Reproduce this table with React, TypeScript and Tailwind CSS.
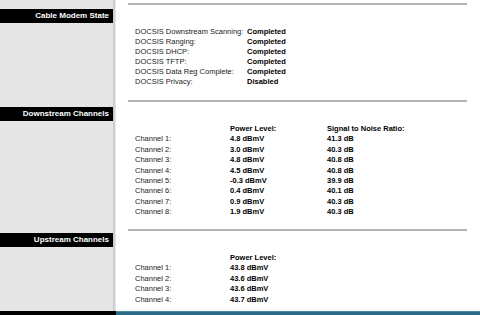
const cableRows = [
  ['DOCSIS Downstream Scanning:', 'Completed'],
  ['DOCSIS Ranging:', 'Completed'],
  ['DOCSIS DHCP:', 'Completed'],
  ['DOCSIS TFTP:', 'Completed'],
  ['DOCSIS Data Reg Complete:', 'Completed'],
  ['DOCSIS Privacy:', 'Disabled'],
]

const downstream = [
  ['4.8 dBmV', '41.3 dB'],
  ['3.0 dBmV', '40.3 dB'],
  ['4.8 dBmV', '40.8 dB'],
  ['4.5 dBmV', '40.8 dB'],
  ['-0.3 dBmV', '39.9 dB'],
  ['0.4 dBmV', '40.1 dB'],
  ['0.9 dBmV', '40.3 dB'],
  ['1.9 dBmV', '40.3 dB'],
]

const upstream = ['43.8 dBmV', '43.6 dBmV', '43.6 dBmV', '43.7 dBmV']

function SideTitle({ title, top }: { title: string; top: string }) {
  return (
    <div className="flex shrink-0">
      <div className={`w-[113px] bg-[#e6e6e6] ${top}`}>
        <div className="flex h-[14px] items-center justify-end bg-black pr-[4px] text-[8px] font-bold text-white">
          {title}
        </div>
      </div>
      <div className="w-[3px] bg-gradient-to-r from-[#bdbdbd] to-[#ececec]" />
    </div>
  )
}

function Rule() {
  return <div className="mt-[3px] ml-[12px] mr-[13px] border-t-2 border-[#b4b4b4]" />
}

function Section({
  title,
  height,
  top,
  children,
}: {
  title: string
  height: string
  top: string
  children: React.ReactNode
}) {
  return (
    <div className={`flex ${height}`}>
      <SideTitle title={title} top={top} />
      <div className="flex-1 bg-white">
        <Rule />
        <div className="mt-[22px] pl-[19px]">{children}</div>
      </div>
    </div>
  )
}

export default function App() {
  return (
    <div className="flex h-[315px] w-[480px] flex-col overflow-hidden bg-white font-['Liberation_Sans',Arial,sans-serif] text-[7.5px] text-[#111]">
      <Section title="Cable Modem State" height="h-[97px]" top="pt-[9px]">
        <div className="grid grid-cols-[112px_auto] leading-[10px]">
          {cableRows.map(([label, value]) => (
            <div key={label} className="contents">
              <span className="text-[#222]">{label}</span>
              <span className="font-bold text-black">{value}</span>
            </div>
          ))}
        </div>
      </Section>

      <Section title="Downstream Channels" height="h-[129px]" top="pt-[10px]">
        <div className="grid grid-cols-[95px_97px_auto] leading-[10.4px]">
          <span />
          <span className="font-bold text-black">Power Level:</span>
          <span className="font-bold text-black">Signal to Noise Ratio:</span>
          {downstream.map(([power, snr], i) => (
            <div key={i} className="contents">
              <span className="text-[#222]">Channel {i + 1}:</span>
              <span className="font-bold text-black">{power}</span>
              <span className="font-bold text-black">{snr}</span>
            </div>
          ))}
        </div>
      </Section>

      <Section title="Upstream Channels" height="h-[85px]" top="pt-[7px]">
        <div className="grid grid-cols-[95px_auto] leading-[10.4px]">
          <span />
          <span className="font-bold text-black">Power Level:</span>
          {upstream.map((power, i) => (
            <div key={i} className="contents">
              <span className="text-[#222]">Channel {i + 1}:</span>
              <span className="font-bold text-black">{power}</span>
            </div>
          ))}
        </div>
      </Section>

      <div className="flex h-[4px] shrink-0">
        <div className="w-[116px] bg-black" />
        <div className="flex-1 border-t border-[#4a8aa5] bg-[#2b6a86]" />
      </div>
    </div>
  )
}
